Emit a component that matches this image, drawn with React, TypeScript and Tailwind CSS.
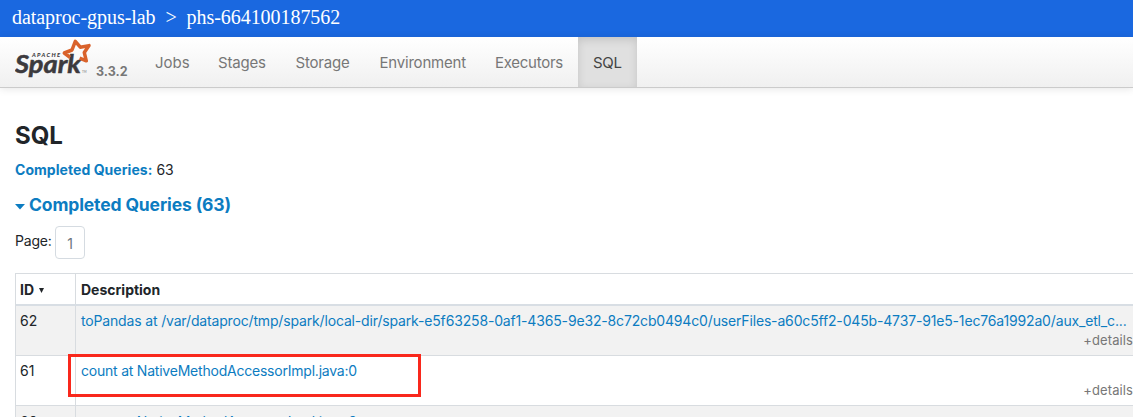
const tabs = [
  { label: "Jobs", cls: "w-[63px]" },
  { label: "Stages", cls: "w-[77.5px] tracking-[-0.2px]" },
  { label: "Storage", cls: "w-[84px] tracking-[-0.2px]" },
  { label: "Environment", cls: "w-[115.5px] tracking-[-0.2px]" },
  { label: "Executors", cls: "w-[98px] tracking-[-0.27px]" },
];

function SparkLogo() {
  return (
    <svg width="80" height="44" viewBox="0 0 80 44" className="block">
      <text x="17" y="20" fontFamily="Lato, sans-serif" fontStyle="italic" fontWeight="900" fontSize="5.8" textLength="28" fill="#3c3a3e">APACHE</text>
      <text x="0" y="35.7" fontFamily="Lato, sans-serif" fontStyle="italic" fontWeight="700" fontSize="25" textLength="66" lengthAdjust="spacingAndGlyphs" fill="#3c3a3e" stroke="#3c3a3e" strokeWidth="0.5">Spark</text>
      <path d="M55 20.4 L49.3 16 L57 13 L60.3 4.3 L65.3 10.2 L74 8.6 L69.3 15.6 L71.3 23.8 L64.6 21.2" fill="none" stroke="#d9622b" strokeWidth="3.5" strokeLinejoin="round" />
      <text x="67" y="36" fontFamily="Lato, sans-serif" fontSize="3" fill="#777">TM</text>
    </svg>
  );
}

function Row({ id, text, shaded, cls, pad }: { id: string; text: string; shaded?: boolean; cls: string; pad: string }) {
  return (
    <div className={`flex h-[50px] border-b border-[#d8dce0] ${shaded ? "bg-[#f2f2f2]" : "bg-white"}`}>
      <div className={`w-[60px] shrink-0 border-r border-[#d8dce0] px-1 ${pad}`}>{id}</div>
      <div className={`min-w-0 flex-1 pl-[5px] ${pad}`}>
        <div className={`whitespace-nowrap text-[#0c7cc1] ${cls}`}>{text}</div>
        <div className="-mt-px text-right text-[13px] leading-5 tracking-[0.1px] text-[#777]">+details</div>
      </div>
    </div>
  );
}

export default function App() {
  return (
    <div className="relative h-[417px] w-[1133px] overflow-hidden bg-white font-['Inter',sans-serif] text-[14px] leading-[21px] text-[#212529]">
      <div className="h-[37px] bg-[#1a68e0] pl-3 font-['Liberation_Serif',serif] text-[20px] leading-[34px] tracking-[-0.05px] whitespace-pre text-white">
        <span>{"dataproc-gpus-lab  >  phs-664100187562"}</span>
      </div>
      <nav className="flex h-[51px] border-b border-[#cbcbcb] bg-linear-to-b from-white to-[#f0f0f0] text-[15px] leading-[52px] text-[#777] shadow-[0_1px_8px_rgba(0,0,0,0.1)]">
        <div className="w-[80px] pl-[15px]"><SparkLogo /></div>
        <span className="w-[60px] pt-[9px] pl-4 text-[12.5px] font-bold">3.3.2</span>
        {tabs.map((t) => (
          <a key={t.label} className={`shrink-0 pl-[15px] ${t.cls}`}>{t.label}</a>
        ))}
        <a className="w-[59px] shrink-0 bg-[#e0e0e0] pl-[15px] tracking-[-0.3px] text-[#444] shadow-[inset_0_3px_8px_rgba(0,0,0,0.125)]">SQL</a>
      </nav>
      <main className="pl-[15px]">
        <h3 className="pt-[33px] text-[24px] leading-[29px] font-bold">SQL</h3>
        <p className="mt-[9px]"><b className="tracking-[0.05px] text-[#0c7cc1]">Completed Queries:</b> 63</p>
        <h4 className="mt-[13px] flex items-center text-[17.5px] leading-[24px] font-bold tracking-[-0.13px] text-[#0c7cc1]">
          <svg width="10" height="6" className="mt-[3px] mr-1"><path d="M0 0h10L5 5.5z" fill="currentColor" /></svg>
          <span>Completed Queries (63)</span>
        </h4>
        <div className="mt-[9px] flex h-[33px]">
          <span className="w-9 pt-1 tracking-[-0.2px]">Page:</span>
          <span className="ml-1 w-[30px] rounded border border-[#d5dbe1] text-center leading-[33px] text-[#6c757d]">1</span>
        </div>
        <div className="mt-[14px] border-t border-l border-[#d8dce0]">
          <div className="flex h-[32px] border-b-2 border-[#d8dee4] font-bold">
            <div className="flex w-[60px] items-center border-r border-[#d8dce0] pl-1">
              <span>ID</span>
              <svg width="5" height="5" className="mt-[3px] ml-[5px]"><path d="M0 0h5L2.5 5z" fill="currentColor" /></svg>
            </div>
            <div className="pt-[5px] pl-[5px]">Description</div>
          </div>
          <Row id="62" shaded pad="pt-1" cls="tracking-[-0.16px]" text="toPandas at /var/dataproc/tmp/spark/local-dir/spark-e5f63258-0af1-4365-9e32-8c72cb0494c0/userFiles-a60c5ff2-045b-4737-91e5-1ec76a1992a0/aux_etl_c..." />
          <Row id="61" pad="pt-1" cls="tracking-[-0.22px]" text="count at NativeMethodAccessorImpl.java:0" />
          <Row id="60" shaded pad="pt-[5px]" cls="tracking-[-0.22px]" text="count at NativeMethodAccessorImpl.java:0" />
        </div>
      </main>
      <div className="absolute top-[354px] left-[68px] h-[43px] w-[353px] border-3 border-[#f9281c]" />
    </div>
  );
}
